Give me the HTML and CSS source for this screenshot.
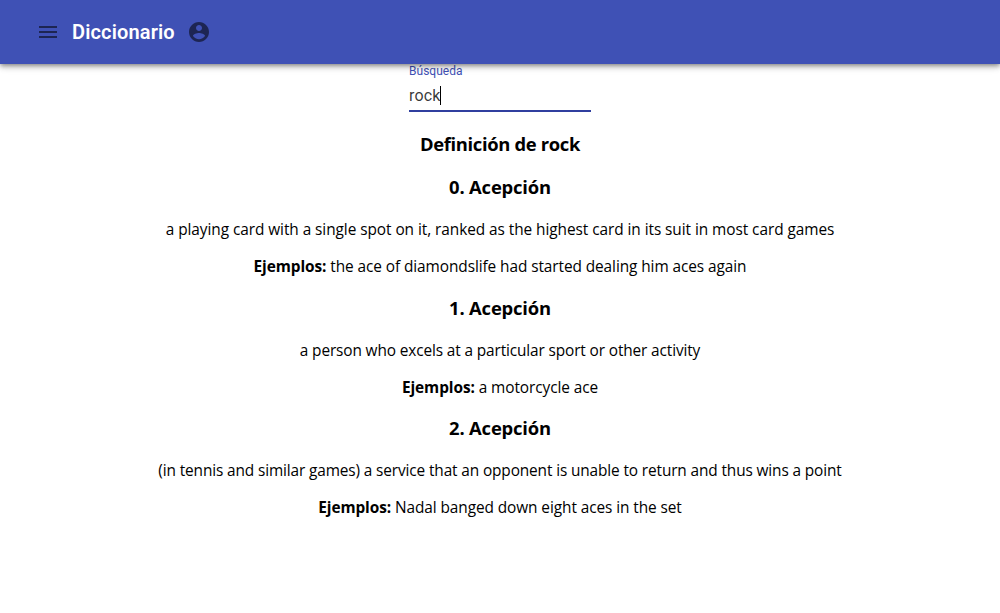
FILE: index.html
```
<!DOCTYPE html>
<html lang="es">
<head>
<meta charset="utf-8">
<title>Diccionario</title>
<link rel="stylesheet" href="styles.css">
</head>
<body>
<header class="app-bar">
  <svg class="icon menu-icon" viewBox="0 0 24 24"><path d="M3 18h18v-2H3v2zm0-5h18v-2H3v2zm0-7v2h18V6H3z"/></svg>
  <span class="title">Diccionario</span>
  <svg class="icon" viewBox="0 0 24 24"><path d="M12 2C6.48 2 2 6.48 2 12s4.48 10 10 10 10-4.480 10-10S17.520 2 12 2zm0 3c1.660 0 3 1.340 3 3s-1.340 3-3 3-3-1.340-3-3 1.340-3 3-3zm0 14.200c-2.500 0-4.710-1.280-6-3.220.030-1.990 4-3.080 6-3.080 1.990 0 5.970 1.090 6 3.080-1.290 1.940-3.500 3.220-6 3.220z"/></svg>
</header>
<main class="content">
  <div class="field">
    <span class="label">Búsqueda</span>
    <div class="input"><span>rock</span><span class="caret"></span></div>
  </div>
  <h3 class="heading main-heading">Definición de rock</h3>
  <section class="sense">
    <h3 class="heading">0. Acepción</h3>
    <p class="text">a playing card with a single spot on it, ranked as the highest card in its suit in most card games</p>
    <p class="text example"><b>Ejemplos:</b> the ace of diamondslife had started dealing him aces again</p>
  </section>
  <section class="sense">
    <h3 class="heading">1. Acepción</h3>
    <p class="text tight">a person who excels at a particular sport or other activity</p>
    <p class="text example"><b>Ejemplos:</b> a motorcycle ace</p>
  </section>
  <section class="sense">
    <h3 class="heading">2. Acepción</h3>
    <p class="text tight">(in tennis and similar games) a service that an opponent is unable to return and thus wins a point</p>
    <p class="text example"><b>Ejemplos:</b> Nadal banged down eight aces in the set</p>
  </section>
</main>
</body>
</html>
```
FILE: styles.css
```
* { box-sizing: border-box; }
body { margin: 0; background: #fff; color: #000; font-family: "Open Sans", "Noto Sans", sans-serif; }
.app-bar { position: relative; display: flex; align-items: center; height: 64px; padding-left: 36px; background: #3f51b5; box-shadow: 0 2px 4px -1px rgba(0,0,0,.2), 0 4px 5px rgba(0,0,0,.14), 0 1px 10px rgba(0,0,0,.12), 0 0 5px rgba(0,0,0,.25); }
.icon { width: 24px; height: 24px; fill: rgba(0,0,0,.54); }
.title { width: 103px; margin: 0 12px; color: #fff; font: 600 20px/32px Roboto, sans-serif; letter-spacing: .14px; white-space: nowrap; }
.content { display: flex; flex-direction: column; align-items: center; text-align: center; }
.field { width: 182px; height: 48px; border-bottom: 2px solid #303f9f; text-align: left; font-family: Roboto, sans-serif; }
.label { display: block; color: #3f51b5; font-size: 12px; line-height: 14px; letter-spacing: .02px; }
.input { display: flex; align-items: center; height: 32px; margin-top: 1px; color: rgba(0,0,0,.78); font-size: 16px; letter-spacing: .15px; }
.caret { width: 1px; height: 19px; background: #000; }
.heading { margin: 17.85px 0 0; font-size: 18.4px; line-height: 25px; font-weight: 700; letter-spacing: -.17px; white-space: nowrap; }
.main-heading { margin-top: 19.2px; letter-spacing: -.33px; }
.sense { display: flex; flex-direction: column; align-items: center; }
.text { margin: 16px 0 0; font-size: 15.4px; line-height: 21px; letter-spacing: -.06px; white-space: nowrap; }
.tight { letter-spacing: -.125px; }
.example { letter-spacing: -.08px; }
.heading + .text { margin-top: 19.85px; }
```
